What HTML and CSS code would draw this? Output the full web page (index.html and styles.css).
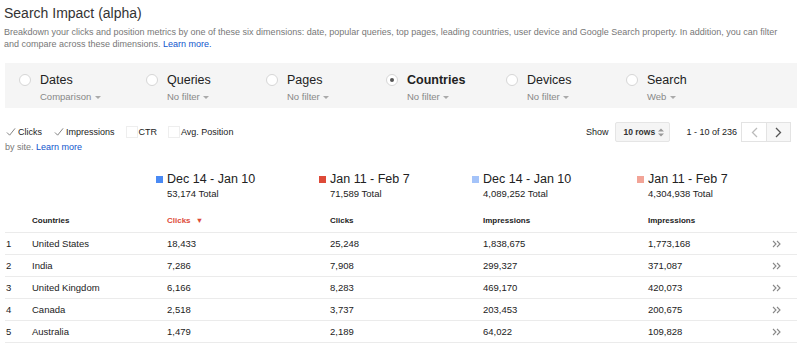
FILE: index.html
```html
<!DOCTYPE html>
<html lang="en">
<head>
    <meta charset="UTF-8">
    <title>Search Impact (alpha)</title>
    <link rel="stylesheet" href="styles.css">
</head>
<body>
    <div id="page">
        <h1>Search Impact (alpha)</h1>
        <p class="intro">Breakdown your clicks and position metrics by one of these six dimensions: date, popular queries, top pages, leading countries, user device and Google Search property. In addition, you can filter and compare across these dimensions. <a href="#">Learn more.</a></p>

        <div class="dimensions">
            <div class="dim">
                <span class="radio"></span>
                <div>
                    <div class="dim-name">Dates</div>
                    <div class="dim-filter">Comparison <span class="caret"></span></div>
                </div>
            </div>
            <div class="dim">
                <span class="radio"></span>
                <div>
                    <div class="dim-name">Queries</div>
                    <div class="dim-filter">No filter <span class="caret"></span></div>
                </div>
            </div>
            <div class="dim">
                <span class="radio"></span>
                <div>
                    <div class="dim-name">Pages</div>
                    <div class="dim-filter">No filter <span class="caret"></span></div>
                </div>
            </div>
            <div class="dim">
                <span class="radio checked"></span>
                <div>
                    <div class="dim-name selected">Countries</div>
                    <div class="dim-filter">No filter <span class="caret"></span></div>
                </div>
            </div>
            <div class="dim">
                <span class="radio"></span>
                <div>
                    <div class="dim-name">Devices</div>
                    <div class="dim-filter">No filter <span class="caret"></span></div>
                </div>
            </div>
            <div class="dim">
                <span class="radio"></span>
                <div>
                    <div class="dim-name">Search</div>
                    <div class="dim-filter">Web <span class="caret"></span></div>
                </div>
            </div>
        </div>

        <div class="toolbar">
            <div class="metrics">
                <div class="checks">
                    <label class="check"><span class="box on"><svg width="11" height="10" viewBox="0 0 11 10"><path d="M1 5.5 L4 8.5 L10 1" fill="none" stroke="#777" stroke-width="1"/></svg></span>Clicks</label>
                    <label class="check"><span class="box on"><svg width="11" height="10" viewBox="0 0 11 10"><path d="M1 5.5 L4 8.5 L10 1" fill="none" stroke="#777" stroke-width="1"/></svg></span>Impressions</label>
                    <label class="check"><span class="box"></span>CTR</label>
                    <label class="check"><span class="box"></span>Avg. Position</label>
                </div>
                <div class="note">by site. <a href="#">Learn more</a></div>
            </div>
            <div class="paging">
                <span class="show">Show</span>
                <div class="select">10 rows
                    <svg width="6" height="9" viewBox="0 0 6 9"><path d="M0 3.5 L3 0.5 L6 3.5 Z M0 5.5 L3 8.5 L6 5.5 Z" fill="#999"/></svg>
                </div>
                <span class="range">1 - 10 of 236</span>
                <div class="pager">
                    <button class="prev"><svg width="7" height="11" viewBox="0 0 7 11"><path d="M6 1 L1.5 5.5 L6 10" fill="none" stroke="#bbb" stroke-width="1.3"/></svg></button>
                    <button class="next"><svg width="7" height="11" viewBox="0 0 7 11"><path d="M1 1 L5.5 5.5 L1 10" fill="none" stroke="#555" stroke-width="1.3"/></svg></button>
                </div>
            </div>
        </div>

        <div class="report">
            <div class="legend-row">
                <div></div>
                <div class="legend"><div class="period"><span class="swatch blue"></span>Dec 14 - Jan 10</div><div class="total">53,174 Total</div></div>
                <div class="legend"><div class="period"><span class="swatch red"></span>Jan 11 - Feb 7</div><div class="total">71,589 Total</div></div>
                <div class="legend"><div class="period"><span class="swatch light-blue"></span>Dec 14 - Jan 10</div><div class="total">4,089,252 Total</div></div>
                <div class="legend"><div class="period"><span class="swatch light-red"></span>Jan 11 - Feb 7</div><div class="total">4,304,938 Total</div></div>
            </div>

            <div class="row head">
                <div></div>
                <div>Countries</div>
                <div class="val sorted">Clicks <span class="sort">&#9660;</span></div>
                <div class="val">Clicks</div>
                <div class="val">Impressions</div>
                <div class="val">Impressions</div>
                <div></div>
            </div>
            <div id="rows"></div>
        </div>
    </div>

    <script>
        const data = [
            ['United States', '18,433', '25,248', '1,838,675', '1,773,168'],
            ['India', '7,286', '7,908', '299,327', '371,087'],
            ['United Kingdom', '6,166', '8,283', '469,170', '420,073'],
            ['Canada', '2,518', '3,737', '203,453', '200,675'],
            ['Australia', '1,479', '2,189', '64,022', '109,828']
        ];

        const arrow = '<svg width="9" height="8" viewBox="0 0 9 8"><path d="M1 1 L4 4 L1 7 M5 1 L8 4 L5 7" fill="none" stroke="#888" stroke-width="1.1"/></svg>';

        let html = '';
        data.forEach(function(r, i) {
            html += '<div class="row">' +
                '<div class="idx">' + (i + 1) + '</div>' +
                '<div>' + r[0] + '</div>' +
                '<div class="val">' + r[1] + '</div>' +
                '<div class="val">' + r[2] + '</div>' +
                '<div class="val">' + r[3] + '</div>' +
                '<div class="val">' + r[4] + '</div>' +
                '<div class="more">' + arrow + '</div>' +
                '</div>';
        });
        document.getElementById('rows').innerHTML = html;
    </script>
</body>
</html>
```

FILE: styles.css
```css
body {
  margin: 0;
  background: #fff;
  font-family: "Liberation Sans", Arial, sans-serif;
  color: #222;
}

a {
  color: #1155cc;
  text-decoration: none;
}

#page {
  padding: 0 3px 0 4px;
}

h1 {
  margin: 4px 0 0;
  font-size: 14px;
  line-height: 18px;
  font-weight: normal;
  color: #333;
}

.intro {
  margin: 4px 0 0;
  max-width: 790px;
  font-size: 9px;
  line-height: 12px;
  color: #777;
}

/* dimension picker */
.dimensions {
  margin: 13px 0 0 1px;
  background: #f5f5f5;
  display: grid;
  grid-template-columns: 127px repeat(5, 120px);
  padding: 9px 0 4px 14px;
  height: 32px;
}

.dim {
  display: flex;
  align-items: flex-start;
  gap: 9px;
}

.radio {
  width: 10px;
  height: 10px;
  border: 1px solid #d6d6d6;
  border-radius: 50%;
  background: #fff;
  margin-top: 2px;
  position: relative;
}

.radio.checked::after {
  content: "";
  position: absolute;
  left: 3px;
  top: 3px;
  width: 4px;
  height: 4px;
  border-radius: 50%;
  background: #555;
}

.dim-name {
  font-size: 12.5px;
  line-height: 16px;
  color: #222;
}

.dim-name.selected {
  font-weight: bold;
}

.dim-filter {
  margin-top: 2px;
  font-size: 9.5px;
  line-height: 14px;
  color: #888;
}

.caret {
  display: inline-block;
  width: 0;
  height: 0;
  border-left: 3px solid transparent;
  border-right: 3px solid transparent;
  border-top: 3px solid #aaa;
  vertical-align: middle;
  margin-left: 1px;
}

/* metrics and paging */
.toolbar {
  display: flex;
  justify-content: space-between;
  margin-top: 14px;
  padding: 0 6px 0 1px;
}

.checks {
  display: flex;
  height: 20px;
  align-items: center;
  font-size: 9px;
  color: #222;
}

.check {
  display: flex;
  align-items: center;
  margin-right: 11px;
}

.box {
  width: 10px;
  height: 10px;
  border: 1px solid #eee;
  margin-right: 1px;
  display: flex;
  align-items: center;
  justify-content: center;
}

.box.on {
  border-color: transparent;
}

.note {
  font-size: 9px;
  line-height: 10px;
  color: #777;
}

.paging {
  display: flex;
  align-items: center;
  height: 20px;
  font-size: 9px;
  color: #222;
}

.show {
  margin-right: 7px;
}

.select {
  display: flex;
  align-items: center;
  justify-content: space-between;
  box-sizing: border-box;
  width: 55px;
  height: 20px;
  padding: 0 5px 0 7px;
  background: #f5f5f5;
  border: 1px solid #e5e5e5;
  border-radius: 2px;
  font-size: 8.5px;
  font-weight: bold;
  color: #333;
  white-space: nowrap;
  margin-right: 16px;
}

.range {
  margin-right: 4px;
}

.pager {
  display: flex;
}

.pager button {
  width: 25px;
  height: 20px;
  padding: 0;
  border: 1px solid #e3e3e3;
  background: #fff;
  display: flex;
  align-items: center;
  justify-content: center;
}

.pager .prev {
  border-right: none;
}

.pager .next {
  background: #f7f7f7;
}

/* report table */
.report {
  margin: 19px 0 0 1px;
}

.legend-row,
.row {
  display: grid;
  grid-template-columns: 27px 124px 163px 153px 165px 135px 26px;
}

.legend-row {
  grid-template-columns: 151px 163px 153px 165px 161px;
  height: 31px;
}

.period {
  font-size: 12.5px;
  line-height: 16px;
  color: #222;
  display: flex;
  align-items: center;
}

.swatch {
  width: 7px;
  height: 7px;
  margin-right: 4px;
}

.blue { background: #4a8af4; }
.red { background: #de4a38; }
.light-blue { background: #a4c3f9; }
.light-red { background: #f2a497; }

.total {
  padding-left: 11px;
  font-size: 9.5px;
  line-height: 14px;
  color: #222;
}

.row {
  height: 21px;
  align-items: center;
  border-bottom: 1px solid #ebebeb;
  font-size: 9.5px;
  color: #222;
}

.row .idx {
  padding-left: 1px;
}

.row .val {
  padding-left: 11px;
}

.row.head {
  margin-top: 7px;
  height: 23px;
  font-size: 8px;
  font-weight: bold;
}

.row.head .sorted {
  color: #dd4b39;
}

.sort {
  font-size: 7.5px;
  margin-left: 3px;
}

.more {
  display: flex;
  align-items: center;
}
```
